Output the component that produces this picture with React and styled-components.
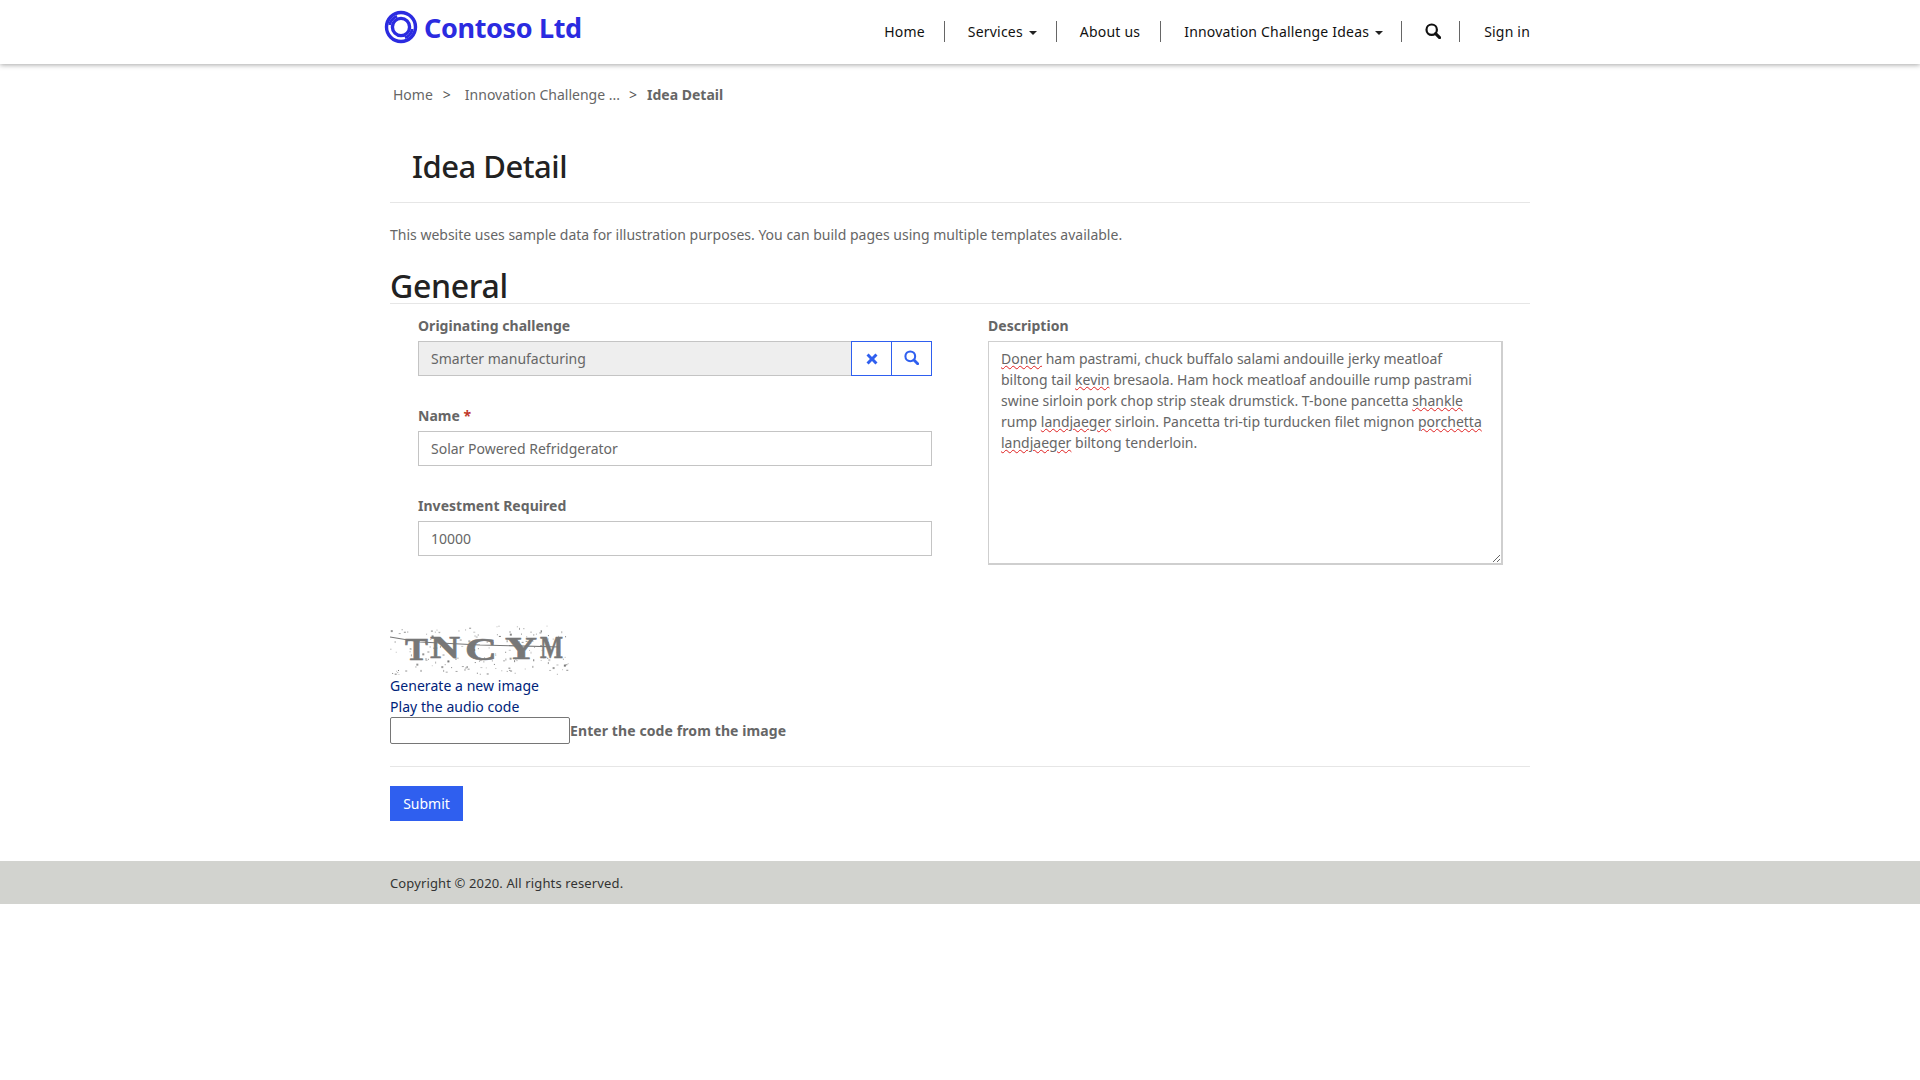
import React from 'react';
import styled, { createGlobalStyle } from 'styled-components';

const Global = createGlobalStyle`
  html, body { margin: 0; padding: 0; background: #fff; }
  body { font-family: "Noto Sans", "Open Sans", "Liberation Sans", sans-serif; font-size: 14px; line-height: 21px; color: #666; }
  * { box-sizing: border-box; }
`;
const FONT = `"Noto Sans", "Open Sans", "Liberation Sans", sans-serif`;

const Header = styled.header`
  height: 64px; background: #fff; box-shadow: 0 1px 5px rgba(0,0,0,.35);
  display: flex; justify-content: center; position: relative;
`;
const HeaderInner = styled.div`
  width: 1140px; display: flex; justify-content: space-between; align-items: flex-start;
`;
const Brand = styled.div`
  display: flex; align-items: center; gap: 6px; margin-left: -6px; margin-top: 10px; height: 34px;
  font: 700 27px/36px ${FONT}; color: #2b2be0; letter-spacing: -.35px;
`;
const BrandName = styled.span`
  margin-top: 2px;
`;
const Nav = styled.nav`
  display: flex; align-items: center; margin-top: 21px; height: 21px;
`;
const NavItem = styled.a`
  display: flex; align-items: center; gap: 6px; height: 21px; padding: 0 ${p => p.$pr || 19}px 0 ${p => p.$pl || 23}px;
  border-right: 1px solid #666;
  color: #111; font-size: 14px; letter-spacing: .2px; line-height: 21px;
  &:last-child { padding-right: 0; border-right: 0; }
`;
const Caret = styled.span`
  width: 0; height: 0; border-left: 4px solid transparent; border-right: 4px solid transparent; border-top: 4px solid #222; display: inline-block; margin-top: 2px;
`;

const Main = styled.main`
  width: 1140px; margin: 0 auto;
`;
const Crumbs = styled.div`
  display: flex; align-items: center; height: 21px; margin-top: 20px; padding-left: 3px; font-size: 14px;
`;
const Crumb = styled.span`
  color: #666; font-weight: ${p => p.$active ? 700 : 400};
`;
const Sep = styled.span`
  margin: 0 ${p => p.$r || 14}px 0 ${p => p.$l || 10}px; color: #555;
`;
const PageHead = styled.div`
  margin-top: 32px; height: 66px; padding: 6px 0 0 22px; border-bottom: 1px solid #e6e6e6;
`;
const H1 = styled.h1`
  margin: 0; font: 500 31px/46px ${FONT}; color: #222; letter-spacing: -.5px;
`;
const Lead = styled.p`
  margin: 21px 0 0; font-size: 14px; line-height: 21px;
`;
const H2 = styled.h2`
  margin: 19px 0 0; font: 500 32px/44px ${FONT}; color: #222; height: 40px; border-bottom: 1px solid #e6e6e6; letter-spacing: -.3px;
`;
const Columns = styled.div`
  display: grid; grid-template-columns: 570px 570px; margin-top: 11px;
`;
const Col = styled.div`
  padding: 0 ${p => p.$pr}px 0 ${p => p.$pl}px;
`;
const Field = styled.div`
  margin-bottom: 29px;
`;
const Label = styled.label`
  display: block; font-weight: 700; font-size: 14px; line-height: 21px; color: #666; letter-spacing: .03px; margin-bottom: 5px;
`;
const Req = styled.span`
  color: #c0392b;
`;
const Input = styled.input`
  display: block; width: ${p => p.$w || '100%'}; height: 35px; border: 1px solid #c4c4c4; padding: 0 12px; font: 14px ${FONT}; color: #666; background: ${p => p.readOnly ? '#eee' : '#fff'}; border-radius: 0; outline: none;
`;
const Lookup = styled.div`
  display: flex; height: 35px;
`;
const LookupBtn = styled.button`
  width: ${p => p.$w}px; height: 35px; border: 1px solid #2f5fef; margin-left: -1px; background: #fff; color: #2f5fef; display: flex; align-items: center; justify-content: center; padding: 0;
`;
const Area = styled.div`
  width: 515px; height: 224px; border: 2px solid #cfcfcf; border-width: 1px 2px 2px 1px; padding: 6px 12px; overflow: auto; resize: both; font-size: 14px; line-height: 21px; color: #666;
`;
const Sp = styled.span`
  text-decoration: underline wavy #e02020 1px; text-underline-offset: 1px;
`;
const Captcha = styled.div`
  margin-top: 40px; display: flex; flex-direction: column; align-items: flex-start;
`;
const CaptchaImg = styled.svg`
  display: block;
`;
const CapLink = styled.a`
  display: block; color: #00237a; line-height: 21px; letter-spacing: .05px;
`;
const CapRow = styled.div`
  display: flex; align-items: center; height: 27px; font-weight: 700; color: #666; letter-spacing: .1px;
`;
const CapInput = styled.input`
  width: 180px; height: 27px; border: 1px solid #767676; border-radius: 2px; padding: 0; outline: none;
`;
const Rule = styled.hr`
  border: 0; border-top: 1px solid #e6e6e6; margin: 22px 0 19px;
`;
const Submit = styled.button`
  width: 73px; height: 35px; background: #2f5fef; border: 0; color: #fff; font: 14px ${FONT}; padding: 0; display: block;
`;
const Footer = styled.footer`
  margin-top: 40px; height: 43px; background: #d2d3cf; display: flex; justify-content: center; align-items: center;
`;
const FooterInner = styled.div`
  width: 1140px; font-size: 13px; color: #333; letter-spacing: .13px; padding-top: 2px;
`;
const SearchSvg = styled.svg`
  display: block; margin-top: -2px;
`;

function Logo() {
  return (
    <svg width="34" height="34" viewBox="0 0 34 34" fill="none" stroke="#2b2be0">
      <circle cx="17" cy="17" r="14.5" strokeWidth="3.4" />
      <circle cx="17" cy="17" r="8.6" strokeWidth="3.4" />
      <path d="M5.7 15A11.5 11.5 0 0 1 13.07 6.19" strokeWidth="2.8" />
      <path d="M28.3 19A11.5 11.5 0 0 1 20.93 27.81" strokeWidth="2.8" />
    </svg>
  );
}

function XIcon() {
  return (
    <svg width="14" height="14" viewBox="0 0 14 14">
      <path d="M1.5 3.6 3.6 1.5 7 4.9l3.4-3.4 2.1 2.1L9.1 7l3.4 3.4-2.1 2.1L7 9.1l-3.4 3.4-2.1-2.1L4.9 7z" fill="#2f5fef" />
    </svg>
  );
}

function SearchGlyph({ size = 16 }) {
  return (
    <SearchSvg width={size} height={size} viewBox="0 0 16 16" fill="none" stroke="currentColor">
      <circle cx="6.7" cy="6.7" r="5.2" strokeWidth="2.2" />
      <path d="M10.6 10.6 14.6 14.6" strokeWidth="3" strokeLinecap="round" />
    </SearchSvg>
  );
}

const LETTERS = [
  ['T', 15, 23, 35], ['N', 40, 30, 33], ['C', 75, 32, 35], ['Y', 115, 32, 34], ['M', 150, 23, 33],
];

function CaptchaPicture() {
  const dots = [];
  let s = 12345;
  const r = () => { s = (s * 1103515245 + 12345) & 0x7fffffff; return s / 0x7fffffff; };
  for (let i = 0; i < 170; i++) {
    dots.push(<rect key={i} x={r() * 178} y={r() * 50} width={r() > 0.7 ? 2 : 1} height={r() > 0.7 ? 2 : 1} fill="#777" opacity={0.4 + r() * 0.6} />);
  }
  return (
    <CaptchaImg width="180" height="50" viewBox="0 0 180 50">
      {dots}
      {LETTERS.map(([ch, x, w, y]) => (
        <text key={ch} x={x} y={y} fontFamily="'Liberation Serif', serif" fontWeight="700" fontSize="32" fill="#777" textLength={w} lengthAdjust="spacingAndGlyphs" stroke="#777" strokeWidth=".6">{ch}</text>
      ))}
      <path d="M0 12 30 17 90 20 170 22" stroke="#777" strokeWidth="1.2" fill="none" />
    </CaptchaImg>
  );
}

export default function App() {
  return (
    <>
      <Global />
      <Header>
        <HeaderInner>
          <Brand><Logo /><BrandName>Contoso Ltd</BrandName></Brand>
          <Nav>
            <NavItem>Home</NavItem>
            <NavItem>Services <Caret /></NavItem>
            <NavItem $pr={20}>About us</NavItem>
            <NavItem $pr={18}>Innovation Challenge Ideas <Caret /></NavItem>
            <NavItem $pr={18}><SearchGlyph /></NavItem>
            <NavItem $pl={24}>Sign in</NavItem>
          </Nav>
        </HeaderInner>
      </Header>
      <Main>
        <Crumbs>
          <Crumb>Home</Crumb><Sep>&gt;</Sep>
          <Crumb>Innovation Challenge ...</Crumb><Sep $l={9} $r={10}>&gt;</Sep>
          <Crumb $active>Idea Detail</Crumb>
        </Crumbs>
        <PageHead><H1>Idea Detail</H1></PageHead>
        <Lead>This website uses sample data for illustration purposes. You can build pages using multiple templates available.</Lead>
        <H2>General</H2>
        <Columns>
          <Col $pl={28} $pr={28}>
            <Field>
              <Label>Originating challenge</Label>
              <Lookup>
                <Input readOnly value="Smarter manufacturing" $w="434px" />
                <LookupBtn $w={41}><XIcon /></LookupBtn>
                <LookupBtn $w={41}><SearchGlyph size={15} /></LookupBtn>
              </Lookup>
            </Field>
            <Field>
              <Label>Name <Req>*</Req></Label>
              <Input defaultValue="Solar Powered Refridgerator" />
            </Field>
            <Field>
              <Label>Investment Required</Label>
              <Input defaultValue="10000" />
            </Field>
          </Col>
          <Col $pl={28} $pr={27}>
            <Label>Description</Label>
            <Area>
              <Sp>Doner</Sp> ham pastrami, chuck buffalo salami andouille jerky meatloaf biltong tail <Sp>kevin</Sp> bresaola. Ham hock meatloaf andouille rump pastrami swine sirloin pork chop strip steak drumstick. T-bone pancetta <Sp>shankle</Sp> rump <Sp>landjaeger</Sp> sirloin. Pancetta tri-tip turducken filet mignon <Sp>porchetta</Sp> <Sp>landjaeger</Sp> biltong tenderloin.
            </Area>
          </Col>
        </Columns>
        <Captcha>
          <CaptchaPicture />
          <CapLink>Generate a new image</CapLink>
          <CapLink>Play the audio code</CapLink>
          <CapRow><CapInput />Enter the code from the image</CapRow>
        </Captcha>
        <Rule />
        <Submit>Submit</Submit>
      </Main>
      <Footer><FooterInner>Copyright © 2020. All rights reserved.</FooterInner></Footer>
    </>
  );
}
